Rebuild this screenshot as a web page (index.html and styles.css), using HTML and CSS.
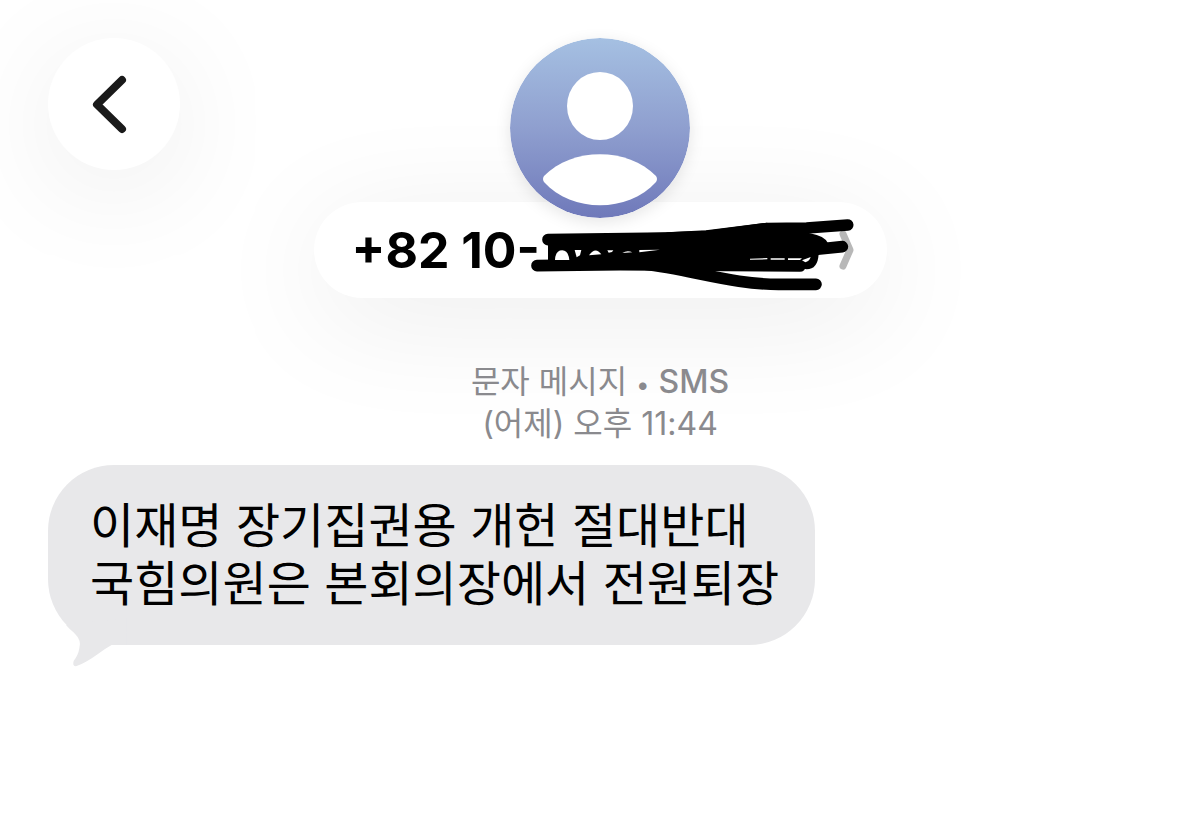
FILE: index.html
```html
<!DOCTYPE html>
<html lang="ko">
<head>
    <meta charset="UTF-8">
    <meta name="viewport" content="width=device-width, initial-scale=1.0">
    <title>메시지</title>
    <link rel="stylesheet" href="styles.css">
</head>
<body>

    <header class="chat-header">
        <button type="button" class="back-btn" aria-label="뒤로">
            <svg class="back-icon" viewBox="0 0 36 60" aria-hidden="true">
                <path d="M31 6 L6 30.500 L31 55"/>
            </svg>
        </button>

        <div class="contact">
            <svg class="avatar" viewBox="0 0 180 180" aria-hidden="true">
                <defs>
                    <linearGradient id="avatarFill" x1="0" y1="0" x2="0" y2="1">
                        <stop offset="0" stop-color="#a5c0e2"/>
                        <stop offset="0.500" stop-color="#8f9fcf"/>
                        <stop offset="1" stop-color="#6f79ba"/>
                    </linearGradient>
                </defs>
                <circle cx="90" cy="90" r="90" fill="url(#avatarFill)"/>
                <ellipse cx="90" cy="68" rx="33" ry="34" fill="#fff"/>
                <path d="M34 138 C62 109 118 109 146 138 Q148 141 146 144 C118 175 62 175 34 144 Q32 141 34 138 Z" fill="#fff"/>
            </svg>
            <button type="button" class="contact-btn">
                <span class="phone">+82 10-</span>
                <svg class="contact-arrow" viewBox="0 0 16 40" aria-hidden="true">
                    <path d="M4 4 L11 20 L4 36"/>
                </svg>
                <!-- trazo que tapa el resto -->
                <svg class="scribble" viewBox="-618 6 1719 288" aria-hidden="true">
                    <path class="ink" d="M84 119 L440 114 L560 108 L740 86 L860 84 L983 75"/>
                    <path class="ink" d="M51 197 L300 194 L840 198"/>
                    <path class="ink" d="M370 192 C520 210 640 254 780 253 L888 253"/>
                    <path class="ink" d="M700 120 L870 150 L967 140"/>
                    <path d="M84 110 L440 97 L560 92 L740 68 L870 100 Q915 108 924 130 L896 165 L840 184 L840 210 L570 213 L640 240 L350 205 L84 200 Z"/>
                    <path d="M840 180 L896 160 Q894 208 860 208 L840 204 Z"/>
                    <g fill="#fff">
                        <path d="M105 180 Q106 151 127 151 Q145 152 148 180 Z"/>
                        <path d="M164 150 L184 150 L180 166 L170 172 Z"/>
                        <path d="M207 166 Q226 138 244 163 Z"/>
                        <path d="M262 151 L280 151 L276 156 L266 158 Z"/>
                        <path d="M307 159 Q322 149 337 157 Z"/>
                        <path d="M358 150 L420 149 L358 157 Z"/>
                        <path d="M690 176 L742 174 L742 178 L690 179 Z M752 175 L794 175 L794 179 L752 179 Z M804 175 L846 175 L840 180 L804 180 Z"/>
                        <path d="M846 181 L872 171 Q868 184 856 187 Z"/>
                    </g>
                </svg>
            </button>
        </div>
    </header>

    <main class="chat">
        <p class="meta">문자 메시지 <span class="dot">•</span> <span class="service">SMS</span><br>(어제) 오후 11:44</p>
        <div class="bubble">
            <p class="bubble-text">이재명 장기집권용 개헌 절대반대<br>국힘의원은 본회의장에서 전원퇴장</p>
            <svg class="bubble-tail" viewBox="54 462 240 192" aria-hidden="true">
                <path d="M108 522 Q118 534 132 545 Q156 568 148 592 Q145 612 131 630 Q126 648 140 645 C180 632 215 597 245 582 L290 582 L290 500 Z"/>
            </svg>
        </div>
    </main>

</body>
</html>
```

FILE: styles.css
```css
body {
    font-family: Inter, "Noto Sans CJK KR", sans-serif;
    background-color: #fff;
    color: #000;
    margin: 0;
    overflow-x: hidden;
}

.chat-header {
    display: grid;
    grid-template-columns: 1fr auto 1fr;
    align-items: start;
    padding: 38px 48px 0;
}

.back-btn, .contact-btn {
    display: flex;
    align-items: center;
    border: none;
    background-color: #fff;
    box-shadow: 0 20px 120px rgba(0, 0, 0, 0.08);
    cursor: pointer;
}

.back-btn {
    justify-content: center;
    width: 132px;
    height: 132px;
    padding: 0 10px 0 0;
    border-radius: 50%;
}

.back-icon {
    width: 36px;
    height: 60px;
    fill: none;
    stroke: #1a1a1a;
    stroke-width: 8;
    stroke-linecap: round;
    stroke-linejoin: round;
}

.contact {
    display: flex;
    flex-direction: column;
    align-items: center;
}

.avatar {
    position: relative;
    z-index: 1;
    width: 180px;
    height: 180px;
    margin-bottom: -16px;
    border-radius: 50%;
    box-shadow: 0 4px 16px rgba(0, 0, 0, 0.1);
}

.contact-btn {
    position: relative;
    justify-content: space-between;
    width: 573px;
    height: 96px;
    padding: 0 32px 0 38px;
    border-radius: 48px;
    font-family: inherit;
    color: #000;
}

.phone {
    font-size: 50px;
    font-weight: 700;
    line-height: 60px;
}

.contact-arrow {
    width: 16px;
    height: 40px;
    fill: none;
    stroke: #b8b8b8;
    stroke-width: 7;
    stroke-linecap: round;
    stroke-linejoin: round;
}

.scribble {
    position: absolute;
    inset: 0;
    width: 100%;
    height: 100%;
}

.ink {
    fill: none;
    stroke: #000;
    stroke-width: 35;
    stroke-linecap: round;
    stroke-linejoin: round;
}

.chat {
    position: relative;
    padding: 63px 48px 48px;
}

.meta {
    margin: 0 0 20px;
    font-size: 32px;
    line-height: 42px;
    text-align: center;
    color: #8a8a8e;
}

.dot {
    font-size: 24px;
    line-height: 24px;
}

.service {
    font-weight: 500;
}

.bubble {
    position: relative;
    width: fit-content;
    padding: 28px 36px 36px 42px;
    border-radius: 66px;
    background-color: #e8e8ea;
}

.bubble-text {
    margin: 0;
    font-family: "Noto Sans CJK KR", sans-serif;
    font-size: 48px;
    line-height: 58px;
}

.bubble-tail {
    position: absolute;
    left: 0;
    bottom: -24px;
    width: 80px;
    height: 64px;
    fill: #e8e8ea;
}
```
